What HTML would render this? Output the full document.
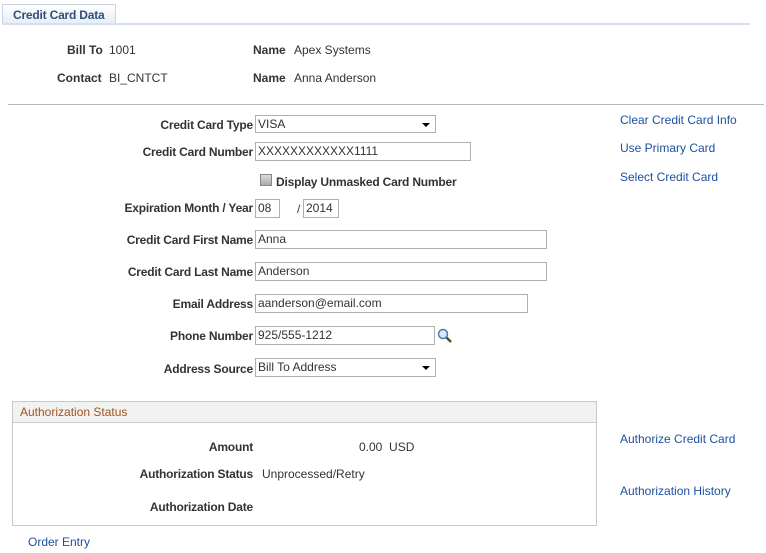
<html><head><style>
body{margin:0;width:766px;height:553px;background:#fff;font-family:"Liberation Sans",Arial,sans-serif;font-size:12px;color:#333;position:relative;overflow:hidden}
.a{position:absolute;white-space:nowrap;line-height:14px}
.l{position:absolute;white-space:nowrap;font-weight:bold;text-align:right;right:513px;line-height:14px;letter-spacing:-0.2px}
.i{position:absolute;border:1px solid #b0b0b0;height:17px;box-sizing:border-box;line-height:17px;padding-left:2px;background:#fff;color:#333}
.lk{position:absolute;color:#1d50a0;white-space:nowrap;line-height:14px}
.dd{position:absolute;right:5px;top:7px;border-left:4px solid transparent;border-right:4px solid transparent;border-top:4px solid #000}
</style></head><body>
<div style="position:absolute;left:2px;top:4px;width:114px;height:20px;border:1px solid #c6d4e4;border-bottom:none;background:linear-gradient(#fff,#e6edf5);box-sizing:border-box"></div>
<div class="a" style="left:13px;top:8px;font-weight:bold;color:#2f4f7a;letter-spacing:-0.2px">Credit Card Data</div>
<div style="position:absolute;left:2px;top:23px;width:748px;height:2px;background:#d4e0ee"></div>
<div class="a" style="left:67px;top:43px;font-weight:bold">Bill To</div><div class="a" style="left:109px;top:43px">1001</div>
<div class="a" style="left:57px;top:71px;font-weight:bold">Contact</div><div class="a" style="left:109px;top:71px">BI_CNTCT</div>
<div class="a" style="left:253px;top:43px;font-weight:bold">Name</div><div class="a" style="left:294px;top:43px">Apex Systems</div>
<div class="a" style="left:253px;top:71px;font-weight:bold">Name</div><div class="a" style="left:294px;top:71px">Anna Anderson</div>
<div style="position:absolute;left:8px;top:104px;width:756px;height:1px;background:#b8b8b8"></div>

<div class="l" style="top:118px">Credit Card Type</div>
<div class="i" style="left:255px;top:115px;width:181px;height:18px">VISA<span class="dd"></span></div>
<div class="l" style="top:145px">Credit Card Number</div>
<div class="i" style="left:255px;top:142px;width:216px;height:19px">XXXXXXXXXXXX1111</div>
<div style="position:absolute;left:260px;top:174px;width:12px;height:12px;border:1px solid #888;box-sizing:border-box;background:linear-gradient(#ddd,#aaa)"></div>
<div class="a" style="left:276px;top:175px;font-weight:bold;letter-spacing:-0.2px">Display Unmasked Card Number</div>
<div class="l" style="top:201px">Expiration Month / Year</div>
<div class="i" style="left:255px;top:199px;width:25px;height:19px">08</div>
<div class="a" style="left:297px;top:202px">/</div>
<div class="i" style="left:303px;top:199px;width:36px;height:19px">2014</div>
<div class="l" style="top:233px">Credit Card First Name</div>
<div class="i" style="left:255px;top:230px;width:292px;height:19px">Anna</div>
<div class="l" style="top:265px">Credit Card Last Name</div>
<div class="i" style="left:255px;top:262px;width:292px;height:19px">Anderson</div>
<div class="l" style="top:297px">Email Address</div>
<div class="i" style="left:255px;top:294px;width:273px;height:19px">aanderson@email.com</div>
<div class="l" style="top:329px">Phone Number</div>
<div class="i" style="left:255px;top:326px;width:180px;height:19px">925/555-1212</div>
<svg style="position:absolute;left:437px;top:328px" width="16" height="16"><circle cx="6" cy="6" r="4.5" fill="#dbe9f7" stroke="#4a7ab5" stroke-width="1.5"/><path d="M9.5 9.5L14 14" stroke="#5a4a2a" stroke-width="2.5"/></svg>
<div class="l" style="top:362px">Address Source</div>
<div class="i" style="left:255px;top:358px;width:181px;height:19px">Bill To Address<span class="dd"></span></div>

<div class="lk" style="left:620px;top:113px">Clear Credit Card Info</div>
<div class="lk" style="left:620px;top:141px">Use Primary Card</div>
<div class="lk" style="left:620px;top:170px">Select Credit Card</div>

<div style="position:absolute;left:12px;top:401px;width:585px;height:125px;border:1px solid #c8c8c8;box-sizing:border-box"></div>
<div style="position:absolute;left:13px;top:402px;width:583px;height:21px;background:#f1f2f2;border-bottom:1px solid #ccc;box-sizing:border-box"></div>
<div class="a" style="left:20px;top:405px;color:#a3541c">Authorization Status</div>
<div class="l" style="top:440px">Amount</div><div class="a" style="left:359px;top:440px">0.00&nbsp;&nbsp;USD</div>
<div class="l" style="top:467px">Authorization Status</div><div class="a" style="left:262px;top:467px">Unprocessed/Retry</div>
<div class="l" style="top:500px">Authorization Date</div>
<div class="lk" style="left:620px;top:432px">Authorize Credit Card</div>
<div class="lk" style="left:620px;top:484px">Authorization History</div>
<div class="lk" style="left:28px;top:535px">Order Entry</div>
</body></html>
